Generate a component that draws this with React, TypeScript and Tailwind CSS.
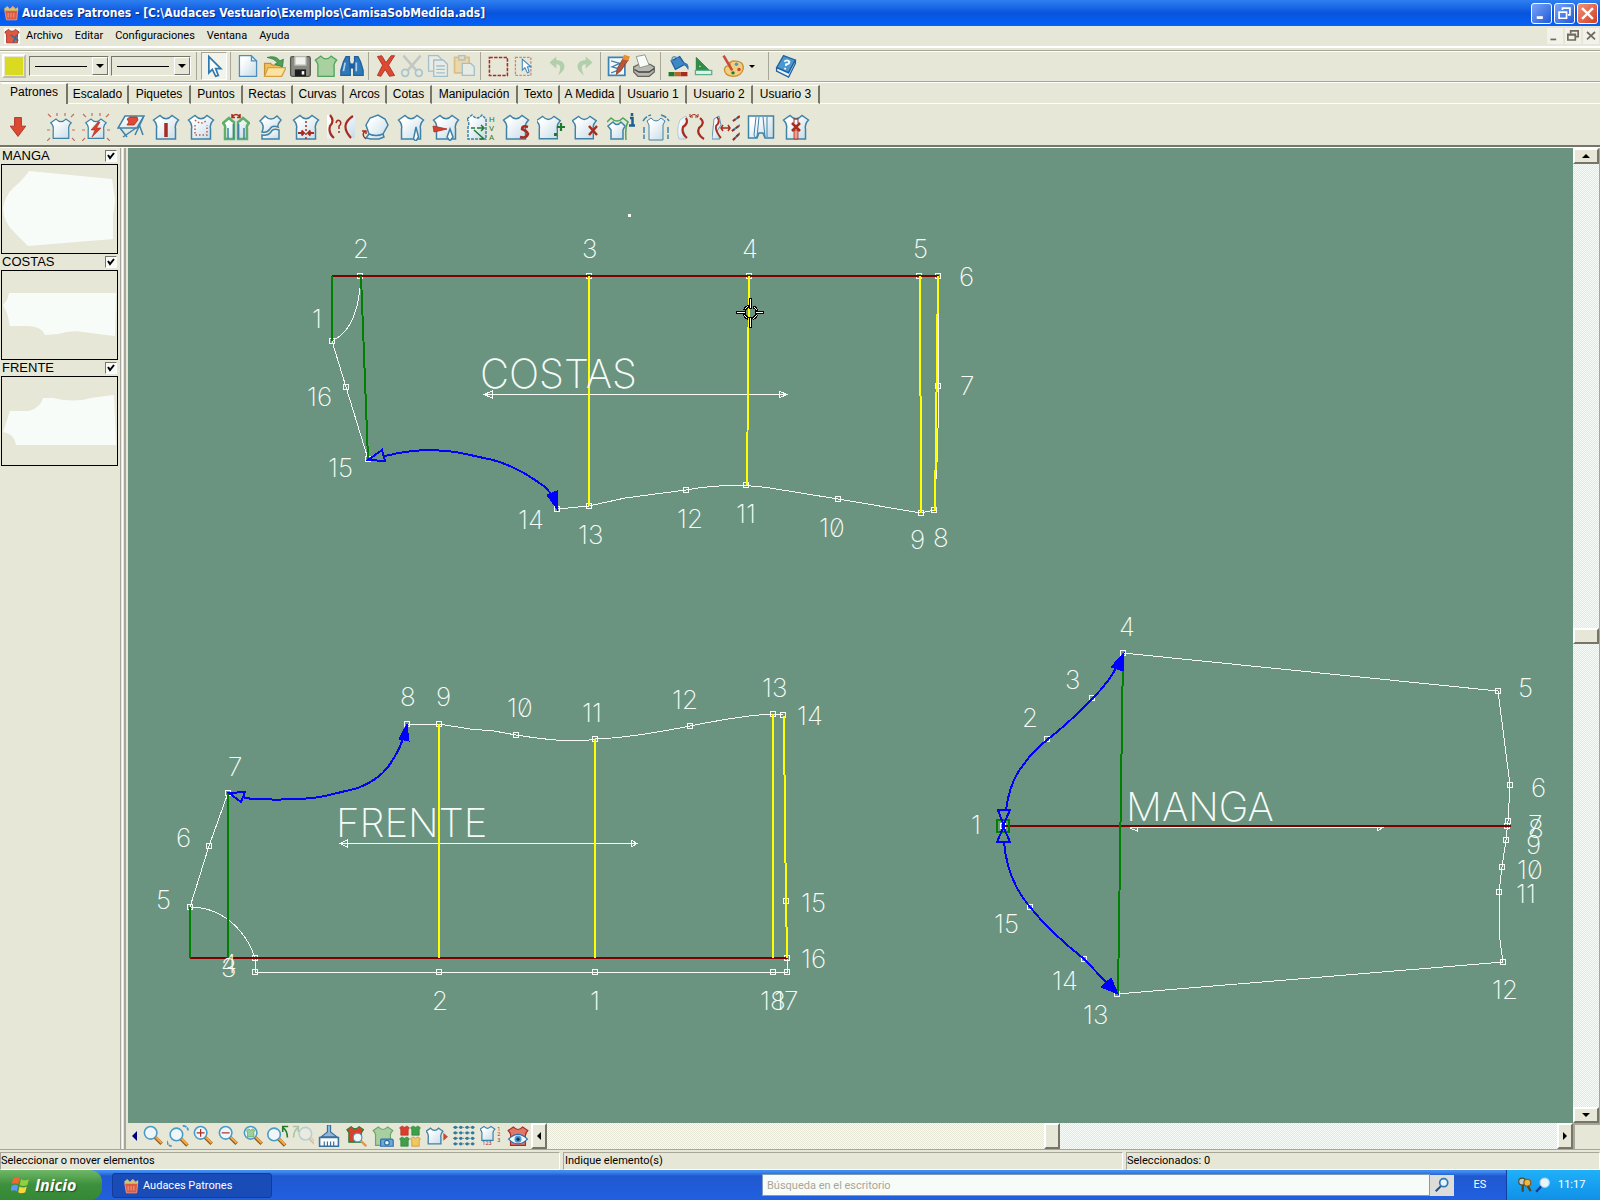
import type { ReactNode } from "react";

const BLUE = "#3f82a8";
const RED = "#a82b20";
const GREEN = "#1f7a2e";
const SHIRT = "M1.5 7 L8 2.5 Q14 9 20 2.5 L26.5 7 Q22.5 11 23.5 16 V26 H4.5 V16 Q5.5 11 1.5 7Z";

const Icon = ({ children, className = "size-7" }: { children: ReactNode; className?: string }) => (
  <svg viewBox="0 0 28 28" className={className} fill="none" strokeWidth="1.5" aria-hidden="true">
    {children}
  </svg>
);

const Shirt = ({ small, fill = "url(#cloth)", stroke = BLUE }: { small?: boolean; fill?: string; stroke?: string }) => (
  <path d={SHIRT} fill={fill} stroke={stroke} transform={small ? "translate(2.5 4) scale(0.82)" : undefined} />
);

const Rays = () => (
  <path
    d="M4 4 L1 1 M10 3 V0 M18 3 V0 M24 4 L27 1 M3 17 H0 M25 17 H28 M3 25 L0 28 M25 25 L28 28"
    stroke="#c4705a"
    strokeWidth="1.2"
  />
);

type Tool = { name: string; icon: ReactNode };

const patternTools: Tool[] = [
  { name: "Nuevo patrón", icon: <><Rays /><Shirt small /></> },
  {
    name: "Patrón rápido",
    icon: <><Rays /><Shirt small /><path d="M16 9 L9 17 H13 L10 24 L19 15 H14.500 L18 9Z" fill="#d8402c" stroke={RED} strokeWidth=".6" /></>,
  },
  {
    name: "Mesa digital",
    icon: (
      <>
        <path d="M8 3 H27 L20 15 H1Z" fill="url(#cloth)" stroke={BLUE} />
        <path d="M10 6 L13 4 H17 L20 4 L21 7 L17 12 H10 L12 9Z" fill="#dd4a35" stroke={RED} strokeWidth=".8" />
        <path d="M3 15 L10 24 M19 15 L6 24 M22 11 L26 22 M26 5 L18 22" stroke={BLUE} />
      </>
    ),
  },
  { name: "Línea central", icon: <><Shirt /><path d="M14 10 V24" stroke={RED} strokeWidth="3.500" /></> },
  { name: "Costura", icon: <><Shirt /><path d="M8 7 Q14 13 20 7 M8 12 V22 H20 V12" stroke="#b5604f" strokeDasharray="1.500 2" /></> },
  {
    name: "Desdoblar",
    icon: (
      <>
        <path d="M1 10 L7 5 Q10 8 12 9 V26 H3 V16 Q4 13 1 10Z M27 10 L21 5 Q18 8 16 9 V26 H25 V16 Q24 13 27 10Z" fill="url(#cloth)" stroke="#5fae6a" strokeWidth="2.500" />
        <path d="M11.500 11 V26 M16.500 11 V26 M6 26 V15 M22 26 V15" stroke={BLUE} />
        <path d="M10 4 Q14 -1 18 4 M10 1 V4.500 H13 M18 1 V4.500 H15" stroke={RED} />
      </>
    ),
  },
  {
    name: "Cortar",
    icon: (
      <>
        <path d="M3 8 L8 3 Q14 9 20 3 L24 7 Q20 12 21 14 Q15 12 13 16 Q10 20 5 19 Q8 12 3 8Z" fill="url(#cloth)" stroke={BLUE} />
        <path d="M5 22 Q11 23 14 19 Q16 15 22 17 V26 H5Z" fill="url(#cloth)" stroke={BLUE} />
      </>
    ),
  },
  { name: "Centrar", icon: <><Shirt /><path d="M14 8 V26" stroke={RED} strokeDasharray="2 2" /><path d="M6 20 H12 M9.500 17.500 L12 20 L9.500 22.500 M22 20 H16 M18.500 17.500 L16 20 L18.500 22.500" stroke={RED} strokeWidth="2" /></> },
  {
    name: "Comparar curvas",
    icon: (
      <>
        <path d="M-1 2 H4 Q7 8 3 13 Q2 20 6 26 H-1Z M29 3 H25 Q13 13 24 25 H29Z" fill="url(#cloth)" />
        <path d="M3 2 Q8 8 3 13 Q1 20 7 25 M26 3 Q12 12 24 25" stroke={RED} strokeWidth="2.200" />
        <path d="M9 10 Q10 6 13 8 Q15 11 12 13 V16 M12 18 V20" stroke={RED} />
      </>
    ),
  },
  {
    name: "Girar",
    icon: <><path d="M4 12 L8 5 L16 2 L23 6 L26 12 L21 21 L22 24 L17 26 H9 L4 25 L7 21Z" fill="url(#cloth)" stroke={BLUE} /><path d="M7 21 Q14 24 21 21" stroke={BLUE} /><path d="M4 26 Q-1 22 3 18 M0 18 H4 V21" stroke={RED} /></>,
  },
  { name: "Pinza", icon: <><Shirt /><path d="M16.500 26 L19 14 L21.500 24 L19 28Z" fill="#f8fcf8" stroke={BLUE} /></> },
  { name: "Mover pinza", icon: <><Shirt /><path d="M1 13 L15 16 L2 19Z" fill="#d8402c" stroke={RED} strokeWidth=".8" /><path d="M15 24 L18 16 L21 24 L18 28Z" fill="#f8fcf8" stroke={BLUE} /></> },
  {
    name: "Alinear",
    icon: (
      <>
        <path d="M0 6 L5 2 Q10 8 15 2 L19 6 V26 H1 V14 Q3 10 0 6Z" fill="url(#cloth)" stroke={BLUE} strokeDasharray="3 1" />
        <path d="M4 15 H8 M10 15 H17 M14 12 L17 15 L14 18 M7 17 L17 26 M13 26 H17" stroke={GREEN} />
        <text x="22" y="9" fontSize="8" fill={GREEN}>H</text>
        <text x="22" y="18" fontSize="8" fill={GREEN}>V</text>
        <text x="22" y="27" fontSize="8" fill={GREEN}>A</text>
      </>
    ),
  },
  { name: "Suavizar", icon: <><Shirt /><path d="M26 14 Q20 12 20 16 Q25 18 26 21 Q24 26 18 24" stroke={RED} strokeWidth="2.500" /></> },
  { name: "Añadir punto", icon: <><g transform="translate(-2 1) scale(.95)"><Shirt /></g><path d="M20 14 H28 M24 10 V18" stroke={GREEN} strokeWidth="2.200" /><path d="M17 20 H20 V23 H17Z" fill={GREEN} /></> },
  { name: "Quitar punto", icon: <><g transform="translate(-1 1) scale(.95)"><Shirt /></g><path d="M17 13 L25 22 M25 13 L17 22" stroke={RED} strokeWidth="2.500" /></> },
  {
    name: "Información",
    icon: (
      <>
        <path d="M0 9 L4 5 Q10 11 16 5 L21 9 Q18 14 19 27" stroke="#4fa35a" />
        <path d="M1 13 L6 9 Q10 14 14 9 L18 13 L16 17 V26 H4 V17Z" fill="url(#cloth)" stroke={BLUE} />
        <path d="M23 5 H25.500 V12 M22 12.500 H28 M25 0 V3" stroke="#1f5f8f" strokeWidth="2.500" />
      </>
    ),
  },
  {
    name: "Holgura",
    icon: <><path d="M5 8 L9 5 Q14 11 19 5 L23 8 Q20 12 21 16 V27 H7 V16 Q8 12 5 8Z" fill="url(#cloth)" stroke={BLUE} strokeWidth="1" /><path d="M1 8 Q4 3 9 2 M19 2 Q24 3 27 8 M2 14 V26 M26 14 V26" stroke={BLUE} strokeDasharray="6 1.500" /></>,
  },
  {
    name: "Copiar curva",
    icon: <><path d="M3 7 L9 3 L10 8 L6 15 L9 26 H2 Q-1 18 3 7Z" fill="url(#cloth)" stroke="#9fc0d0" strokeWidth=".8" /><path d="M9 5 Q12 10 6 14 Q4 20 10 25 M23 5 Q29 10 22 15 Q19 21 27 26" stroke={RED} strokeWidth="2.200" /><path d="M13 4 Q17 -1 21 4 M13 1 V4 H16 M21 1 V4 H18" stroke={RED} strokeWidth="1" /></>,
  },
  {
    name: "Ajustar curva",
    icon: <><path d="M2 6 L7 3 L9 12 L5 18 L8 26 H0Z" fill="url(#cloth)" stroke={BLUE} strokeWidth=".8" /><path d="M5 4 Q9 9 4 13 Q3 18 9 25" stroke={RED} strokeWidth="1.800" /><path d="M9 15 H18 M11 12 L9 15 L11 18 M16 12 L18 15 L16 18" stroke={RED} /><path d="M21 8 L28 3 M20 18 L28 12 M21 27 L28 20" stroke={BLUE} strokeWidth="2" /><path d="M21 8 L28 3 M20 18 L28 12 M21 27 L28 20" stroke={RED} strokeWidth="2" strokeDasharray="3 2" /></>,
  },
  {
    name: "Pantalón",
    icon: <><path d="M1.500 3 H26.500 V25 H18 L16 20 H12 L10 25 H1.500Z" fill="url(#cloth)" stroke={BLUE} /><path d="M9 4 L7 22 Q8 26 10 24 L12 4 M16 4 L18 24 M20 4 V24" stroke={BLUE} strokeWidth="1" /></>,
  },
  { name: "Eliminar patrón", icon: <><Shirt /><path d="M12 17 H16 V26 H12Z" fill="#e8a090" stroke={RED} strokeWidth=".8" /><path d="M12 10 V6 H16 V10" stroke={RED} strokeWidth="1" /><path d="M10 10 L18 18 M18 10 L10 18" stroke={RED} strokeWidth="2.500" /></> },
];

const Lens = ({ x = 11, y = 10 }: { x?: number; y?: number }) => (
  <>
    <path d={`M${x + 5} ${y + 5} L${x + 14} ${y + 14}`} stroke="#8a5a20" strokeWidth="4.500" />
    <path d={`M${x + 6} ${y + 5} L${x + 14} ${y + 13}`} stroke="#f0a848" strokeWidth="2.800" />
    <circle cx={x} cy={y} r="8" fill="#eef6f8" stroke="#4a9ac8" strokeWidth="2" />
  </>
);

const zoomTools: Tool[] = [
  { name: "Zoom", icon: <Lens /> },
  { name: "Zoom ventana", icon: <><path d="M20 1 Q26 1 27 7 M0 20 Q0 26 6 27" stroke="#4a9ac8" strokeWidth="2.200" strokeDasharray="5 1" /><Lens x={12} y={12} /></> },
  { name: "Acercar", icon: <><Lens /><path d="M6 10 H16 M11 5 V15" stroke={RED} /></> },
  { name: "Alejar", icon: <><Lens /><path d="M6 10 H16" stroke={RED} /></> },
  { name: "Zoom patrón", icon: <><Lens /><path d={SHIRT} transform="translate(5 4) scale(.43)" fill="#9fcf98" stroke="#4fa35a" strokeWidth="2" /></> },
  { name: "Zoom anterior", icon: <><Lens x={9} y={12} /><path d="M26 16 Q26 7 20 3 M20 9 V2 H27" stroke={GREEN} strokeWidth="2" /></> },
  { name: "Zoom siguiente", icon: <g opacity=".3"><Lens x={17} y={11} /><path d="M2 16 Q2 7 8 3 M1 2 H8 V9" stroke={GREEN} strokeWidth="2" /></g> },
];

const viewTools: Tool[] = [
  {
    name: "Limpiar",
    icon: <><path d="M12 0 H16 V9 L24 15 H4 L12 9Z" fill="#8fb8d8" stroke="#3a6f9f" /><path d="M2 16 H26 V27 H2Z" fill="#f8fcf8" stroke="#3a6f9f" strokeWidth="2" /><path d="M8 21 V27 M12 21 V27 M16 21 V27 M20 21 V27" stroke="#3a6f9f" /></>,
  },
  {
    name: "Ver patrón",
    icon: <><path d={SHIRT} transform="translate(1 0) scale(.85)" fill="#d8402c" stroke={GREEN} /><path d="M18 18 L27 27" stroke="#e89838" strokeWidth="3" /><circle cx="16" cy="16" r="5.500" fill="#eef6f8" stroke="#4a9ac8" /></>,
  },
  { name: "Captura", icon: <><Shirt fill="#a8cf9f" stroke="#6aa86a" /><path d="M11 19 Q11 18 13 18 H25 Q27 18 27 20 V27 H11Z" fill="#6fa8d8" stroke="#2f6fa8" /><circle cx="19" cy="22.500" r="3" fill="#e8f4f8" stroke="#2f6fa8" /></> },
  {
    name: "Mosaico",
    icon: (
      <>
        <path d={SHIRT} transform="translate(0 0) scale(.5)" fill="#d8402c" stroke={RED} />
        <path d={SHIRT} transform="translate(14 0) scale(.5)" fill="#3f9f4a" stroke={GREEN} />
        <path d={SHIRT} transform="translate(0 14) scale(.5)" fill="#3f9f4a" stroke={GREEN} />
        <path d={SHIRT} transform="translate(14 14) scale(.5)" fill="#f0c860" stroke="#c47a20" />
      </>
    ),
  },
  { name: "Siguiente patrón", icon: <><path d={SHIRT} transform="translate(-1 2) scale(.85)" fill="url(#cloth)" stroke={BLUE} strokeWidth="2" /><path d="M22 10 L28 15 L22 20Z" fill="#c84a38" /></> },
  {
    name: "Rejilla",
    icon: (
      <g fill="#2f7aa0">
        {[3, 10, 17, 24].map((y) => [3, 10, 18, 25].map((x) => <circle key={`${x}-${y}`} cx={x} cy={y} r="2.2" />))}
        <path d="M0 3 H28 M0 10 H28 M0 17 H28 M0 24 H28" stroke="#2f7aa0" strokeWidth="1" strokeDasharray="1.500 1" />
      </g>
    ),
  },
  {
    name: "Numerar",
    icon: <><path d={SHIRT} transform="translate(-1 0) scale(.75)" fill="url(#cloth)" stroke={BLUE} strokeWidth="2" /><text x="3" y="26" fontSize="7" fill={RED}>123</text><text x="22" y="7" fontSize="7" fill={RED}>1</text><text x="22" y="14" fontSize="7" fill={RED}>2</text><text x="22" y="21" fontSize="7" fill={RED}>3</text></>,
  },
  { name: "Mostrar", icon: <><Shirt fill="#e0786a" stroke={RED} /><path d="M2 18 Q14 6 26 18 Q14 30 2 18Z" fill="#f4f8f8" stroke="#2f6fa8" /><circle cx="14" cy="18" r="4.500" fill="#4a9ad8" /><circle cx="14" cy="18" r="2" fill="#12304f" /></> },
];

const fileTools: Tool[] = [
  { name: "Nuevo", icon: <path d="M4 2 H18 L24 8 V26 H4Z M18 2 V8 H24" fill="url(#cloth)" stroke="#4a8fc0" /> },
  {
    name: "Abrir",
    icon: <><path d="M3 11 H10 L12 13 H23 V25 H3Z" fill="#f0c060" stroke="#c89030" /><path d="M7 16 H28 L23 26 H3Z" fill="#fbe2a0" stroke="#d8a040" /><path d="M6 4 Q16 1 21 8 L25 6 L24 15 L15 12 L18 10 Q14 5 6 4Z" fill="#4f9f5a" stroke={GREEN} strokeWidth=".8" /></>,
  },
  { name: "Guardar", icon: <><rect x="3" y="3" width="23" height="23" rx="2" fill="#8a8a84" stroke="#55554f" /><path d="M8 3 H21 V13 H8Z" fill="#f0f2ee" stroke="#b8b8b0" /><path d="M8 18 H21 V26 H8Z" fill="#1c1c1c" /><path d="M16 20 H19 V24 H16Z" fill="#fff" /></> },
  { name: "Patrón", icon: <Shirt fill="#a8d0a0" stroke="#4fa35a" /> },
  {
    name: "Buscar",
    icon: <><path d="M7 3 H11 V8 L12 12 V25 H1 V19 L4 9Z M17 3 H21 L24 9 L27 19 V25 H16 V12 L17 8Z" fill="#2f78b8" stroke="#1f5f9f" /><path d="M11 11 H17 V17 H11Z" fill="#1f5f9f" /><path d="M4 20 L6 10 M19 20 V10" stroke="#a8d0f0" strokeWidth="2" /></>,
  },
];

const editTools: Tool[] = [
  { name: "Eliminar", icon: <path d="M4 3 L9 2 L14 10 L20 2 H24 L17 13 L24 25 L18 26 L13 18 L8 26 L4 25 L10 13Z" fill="#dc4a34" stroke="#a82b20" strokeWidth="1" /> },
  { name: "Cortar", icon: <g opacity=".4" stroke="#4a8fc0" strokeWidth="2"><path d="M4 2 L19 19 M24 2 L9 19" stroke="#8a98a0" strokeWidth="3" /><circle cx="6" cy="22" r="4" /><circle cx="22" cy="22" r="4" /></g> },
  { name: "Copiar", icon: <g opacity=".45" stroke="#4a8fc0"><path d="M3 2 H14 L18 6 V20 H3Z" fill="#eef4f4" /><path d="M9 7 H20 L25 12 V26 H9Z" fill="#eef4f4" /><path d="M12 14 H22 M12 18 H22 M12 22 H22" /></g> },
  { name: "Pegar", icon: <g opacity=".45"><path d="M3 4 H20 V22 H3Z" fill="#f0c870" stroke="#c89030" strokeWidth="2" /><path d="M8 2 H15 V7 H8Z" fill="#d0d0c8" stroke="#88887f" /><path d="M12 11 H22 L26 15 V25 H12Z" fill="#e8f0f4" stroke="#4a8fc0" /></g> },
];

const selectTools: Tool[] = [
  { name: "Seleccionar área", icon: <path d="M4 4 H25 V25 H4Z" stroke={RED} strokeWidth="1.800" strokeDasharray="4 1.500" /> },
  { name: "Seleccionar elemento", icon: <><path d="M4 4 H22 V25 H4Z" stroke="#c48a7f" strokeWidth="1.500" strokeDasharray="3 1.500" /><path d="M12 6 V19 L15 16 L18 22 L20 21 L18 15 H22Z" fill="#fff" stroke="#3f82b8" strokeWidth="1.200" /></> },
];

const historyTools: Tool[] = [
  { name: "Deshacer", icon: <path d="M12 3 L4 10 L12 17 V12 Q20 12 14 25 Q26 16 19 9 Q16 7 12 7Z" fill="#8fc090" opacity=".6" /> },
  { name: "Rehacer", icon: <path d="M16 3 L24 10 L16 17 V12 Q8 12 14 25 Q2 16 9 9 Q12 7 16 7Z" fill="#8fc090" opacity=".6" /> },
];

const outputTools: Tool[] = [
  { name: "Diseñar", icon: <><path d="M3 4 H22 V25 H3Z" fill="#f4faf8" stroke="#3f82b8" strokeWidth="2" /><path d="M6 8 L16 11 L7 15 L17 18 L6 22" stroke="#3f82b8" /><path d="M20 5 L26 7 L17 20 L12 24 L13 17Z" fill="#b8563a" stroke="#7a3020" strokeWidth=".8" /><path d="M21 1 L28 3 L26 8 L19 6Z" fill="#e89030" /></> },
  { name: "Imprimir", icon: <><path d="M2 15 L8 12 H21 L26 15 V21 L20 26 H7 L2 21Z" fill="#b8bab2" stroke="#66665f" /><path d="M5 3 L15 1 L20 13 L9 16Z" fill="#f8fcf8" stroke="#88887f" strokeWidth="1" /><path d="M3 18 L8 21 H20 L26 17" stroke="#44443f" /></> },
];

const drawTools: Tool[] = [
  { name: "Rellenar", icon: <><path d="M6 8 L16 3 L22 12 L11 18Z" fill="#3f88c8" stroke="#1f5f9f" /><path d="M7 9 Q6 0 14 5" stroke="#5f8fb0" /><path d="M20 10 Q28 10 26 19 Q23 14 20 12Z" fill="#2f78b8" /><path d="M3 21 H10 V26 H3Z" fill={GREEN} /><path d="M10 21 H17 V26 H10Z" fill="#c4602a" /><path d="M17 21 H25 V26 H17Z" fill="#a82b20" /></> },
  { name: "Medir", icon: <><path d="M5 4 V19 H20Z M8 12 V16 H12Z" fill="#2f8f4a" stroke={GREEN} strokeWidth="1" fillRule="evenodd" /><path d="M4 19 H23 V24 H4Z" fill="#dff0e8" stroke="#5fae8a" /></> },
];

const ToolButton = ({ tool, className, iconClass }: { tool: Tool; className: string; iconClass?: string }) => (
  <button type="button" aria-label={tool.name} className={`flex shrink-0 items-center justify-center ${className}`}>
    <Icon className={iconClass}>{tool.icon}</Icon>
  </button>
);

const ToolGroup = ({ tools }: { tools: Tool[] }) => (
  <div className="flex">
    {tools.map((tool) => (
      <ToolButton key={tool.name} tool={tool} className="h-7 w-[26px]" iconClass="size-6" />
    ))}
  </div>
);

const Separator = () => <div className="mr-1 ml-[3px] h-7 w-px shrink-0 bg-[#a8a698]" />;

const AppIcon = () => (
  <Icon className="size-4 shrink-0">
    <path d="M3 9 L7 3 L12 8 L17 2 L22 7 L26 6 L24 26 H6Z" fill="#dc5a40" stroke="#f0a090" />
    <path d="M2 6 L8 2 L12 7 L18 3 L22 8 L26 3 V10 H4Z" fill="#c8c878" />
    <path d="M9 14 V22 M14 14 V22 M19 14 V22" stroke="#f4a898" />
  </Icon>
);

const TitleBar = () => (
  <header className="flex h-[26px] items-center bg-linear-to-b from-[#2f7ff0] via-[#0854dc] to-[#0562f8] pr-[2px] pl-[3px]">
    <AppIcon />
    <h1 className="ml-[3px] flex-1 font-['DejaVu_Sans_Condensed','DejaVu_Sans',sans-serif] text-xs leading-4 font-bold text-white [text-shadow:1px_1px_0_#0a2a80]">
      Audaces Patrones - [C:\Audaces Vestuario\Exemplos\CamisaSobMedida.ads]
    </h1>
    <div className="flex gap-[2px]">
      <button type="button" aria-label="Minimizar" className="size-[21px] rounded-[3px] border border-white bg-linear-to-br from-[#7aa4f8] to-[#2058d8]">
        <Icon className="size-full"><path d="M7 20 H16" stroke="#fff" strokeWidth="4" /></Icon>
      </button>
      <button type="button" aria-label="Restaurar" className="size-[21px] rounded-[3px] border border-white bg-linear-to-br from-[#7aa4f8] to-[#2058d8]">
        <Icon className="size-full"><path d="M11 9 V6 H22 V16 H19 M6 12 H17 V21 H6Z" stroke="#fff" strokeWidth="2.500" /></Icon>
      </button>
      <button type="button" aria-label="Cerrar" className="size-[21px] rounded-[3px] border border-white bg-linear-to-br from-[#f09078] to-[#d03c20]">
        <Icon className="size-full"><path d="M6 6 L22 22 M22 6 L6 22" stroke="#fff" strokeWidth="3.500" /></Icon>
      </button>
    </div>
  </header>
);

const menus = ["Archivo", "Editar", "Configuraciones", "Ventana", "Ayuda"];

const MenuBar = () => (
  <nav className="flex h-5 items-center pr-px pl-1">
    <Icon className="size-4 bg-[#f8fcf8]">
      <path d={SHIRT} fill="#dc5a40" stroke={RED} />
      <path d="M12 12 L25 22 M22 12 L16 26" stroke="#2f6f9f" strokeWidth="2.500" />
    </Icon>
    <ul className="flex flex-1 pl-[6px]">
      {menus.map((menu) => (
        <li key={menu} className="mr-3">
          <button type="button">{menu}</button>
        </li>
      ))}
    </ul>
    <div className="flex gap-[2px] text-[#6f6c5f]">
      {["M6 20 H16", "M10 9 V5 H23 V15 H19 M5 11 H18 V21 H5Z M5 12 H18", "M7 7 L21 20 M21 7 L7 20"].map((d, i) => (
        <button key={d} type="button" aria-label={["Minimizar ventana", "Restaurar ventana", "Cerrar ventana"][i]} className="size-4 bg-[#f2f2ea]">
          <Icon className="size-4"><path d={d} stroke="currentColor" strokeWidth="3" /></Icon>
        </button>
      ))}
    </div>
  </nav>
);

const LineSelect = ({ label }: { label: string }) => (
  <div className="relative h-5 w-20 border border-t-[#77756a] border-r-white border-b-white border-l-[#77756a]">
    <select aria-label={label} className="size-full appearance-none text-transparent">
      <option>Continua</option>
    </select>
    <div className="pointer-events-none absolute inset-0 flex items-center">
      <div className="mx-[5px] h-px flex-1 bg-black" />
      <div className="flex h-full w-4 items-center justify-center border border-t-white border-r-[#77756a] border-b-[#77756a] border-l-white bg-[#e7e7d8]">
        <svg viewBox="0 0 8 4" className="h-1 w-2"><path d="M0 0 H8 L4 4Z" /></svg>
      </div>
    </div>
  </div>
);

const MainToolbar = () => (
  <div className="flex h-8 items-center border-y border-t-[#a8a698] border-b-[#a8a698] pl-[2px] shadow-[inset_0_1px_0_#ffffff]">
    <button type="button" aria-label="Color" className="mr-[3px] size-6 border-2 border-t-white border-r-[#c0beb0] border-b-[#c0beb0] border-l-white p-px">
      <span className="block size-full bg-[#dada20]" />
    </button>
    <div className="mr-[2px] flex gap-[2px]">
      <LineSelect label="Tipo de línea" />
      <LineSelect label="Grosor de línea" />
    </div>
    <Separator />
    <button type="button" aria-label="Seleccionar" className="flex h-7 w-[26px] items-center justify-center border border-t-[#a8a698] border-r-white border-b-white border-l-[#a8a698] bg-[#f2f3ea]">
      <Icon className="size-6"><path d="M8 3 V22 L12 18 L16 26 L19 25 L16 17 H22Z" fill="#f8fcf8" stroke="#2f78b0" strokeWidth="2" /></Icon>
    </button>
    <Separator />
    <ToolGroup tools={fileTools} />
    <Separator />
    <ToolGroup tools={editTools} />
    <Separator />
    <ToolGroup tools={selectTools} />
    <div className="w-2" />
    <ToolGroup tools={historyTools} />
    <Separator />
    <ToolGroup tools={outputTools} />
    <Separator />
    <ToolGroup tools={drawTools} />
    <button type="button" aria-label="Paleta" className="ml-1 flex h-7 w-11 items-center gap-1">
      <Icon className="size-6">
        <path d="M14 8 Q27 8 26 17 Q24 26 14 26 Q4 25 4 18 Q5 13 9 14 Q12 13 10 10Z" fill="#f0cf80" stroke="#c89030" />
        <path d="M3 2 L13 19" stroke="#c84a38" strokeWidth="3" />
        <circle cx="18" cy="12" r="2" fill="#4a9ac8" />
        <circle cx="21" cy="18" r="2" fill="#d8402c" />
        <circle cx="14" cy="22" r="2" fill={GREEN} />
      </Icon>
      <svg viewBox="0 0 6 3" className="h-[3px] w-[6px]"><path d="M0 0 H6 L3 3Z" /></svg>
    </button>
    <Separator />
    <button type="button" aria-label="Ayuda" className="flex h-7 w-[26px] items-center justify-center">
      <Icon className="size-6">
        <path d="M11 2 L25 7 L17 22 L3 16Z" fill="#4a98d0" stroke="#1f5f9f" />
        <path d="M3 16 L17 22 L25 7 V11 L17 27 L3 20Z" fill="#e8f4f8" stroke="#1f5f9f" />
        <path d="M12 9 Q15 6 18 9 Q18 12 14 12 V14 M13 16 V18" stroke="#fff" strokeWidth="2" />
      </Icon>
    </button>
  </div>
);

const tabs = [
  { name: "Escalado", width: "w-[61px]" },
  { name: "Piquetes", width: "w-[62px]" },
  { name: "Puntos", width: "w-[52px]" },
  { name: "Rectas", width: "w-[50px]" },
  { name: "Curvas", width: "w-[51px]" },
  { name: "Arcos", width: "w-[43px]" },
  { name: "Cotas", width: "w-[45px]" },
  { name: "Manipulación", width: "w-[86px]" },
  { name: "Texto", width: "w-[42px]" },
  { name: "A Medida", width: "w-[61px]" },
  { name: "Usuario 1", width: "w-[66px]" },
  { name: "Usuario 2", width: "w-[66px]" },
  { name: "Usuario 3", width: "w-[67px]" },
];

const TabPanel = () => (
  <section className="border-b-2 border-[#77756a]">
    <div role="tablist" className="flex h-[22px] items-end border-t border-white pl-[2px] font-['Liberation_Sans',Arial,sans-serif] text-xs leading-4">
      <button type="button" role="tab" aria-selected="true" className="h-[21px] w-[66px] border-t border-r-2 border-t-white border-r-[#77756a] pb-1">
        Patrones
      </button>
      {tabs.map((tab) => (
        <button key={tab.name} type="button" role="tab" aria-selected="false" className={`h-[19px] border-t border-r-2 border-b border-t-white border-r-[#77756a] border-b-white pb-[2px] whitespace-nowrap ${tab.width}`}>
          {tab.name}
        </button>
      ))}
      <div className="h-px flex-1 bg-white" />
    </div>
    <div className="flex h-[41px] items-center pt-1 pl-[6px]">
      <button type="button" aria-label="Insertar" className="mr-[13px] w-6">
        <Icon className="size-6"><path d="M10 3 H18 V13 H23 L14 25 L5 13 H10Z" fill="#dc4a34" stroke={RED} strokeWidth="1" /></Icon>
      </button>
      {patternTools.map((tool) => (
        <ToolButton key={tool.name} tool={tool} className="h-[30px] w-[35px]" />
      ))}
    </div>
  </section>
);

const pieces = [
  { name: "MANGA", shape: "M28 7 L111 15 L114 36 L112 52 V75 L27 82 L14 69 Q2 58 2 44 Q4 32 12 24 Q22 16 28 7Z" },
  { name: "COSTAS", shape: "M8 23 H115 L114 66 Q96 64 82 62 Q70 60 57 64 L44 65 Q40 55 22 56 L9 56 L6 43 L2 35 L6 30Z" },
  { name: "FRENTE", shape: "M9 35 H28 Q40 31 42 22 H52 Q74 27 90 22 Q104 20 113 19 L115 69 H15 Q14 58 2 56Z" },
];

const PieceList = () => (
  <aside className="w-[118px] shrink-0 pl-px">
    {pieces.map((piece) => (
      <div key={piece.name}>
        <label className="flex h-4 items-center justify-between px-px font-['Liberation_Sans',Arial,sans-serif] text-[13px] leading-4">
          {piece.name}
          <span className="relative size-3">
            <input type="checkbox" defaultChecked className="peer block size-3 appearance-none border border-t-[#77756a] border-r-white border-b-white border-l-[#77756a] bg-[#f8fcf8]" />
            <svg viewBox="0 0 12 12" className="pointer-events-none absolute inset-0 hidden size-3 peer-checked:block">
              <path d="M3 5 L5 8 L9 3" fill="none" stroke="#000" strokeWidth="2" />
            </svg>
          </span>
        </label>
        <svg viewBox="0 0 117 90" className="h-[90px] w-full">
          <rect x=".5" y=".5" width="116" height="89" fill="#e7e7d8" stroke="#000" />
          <path d={piece.shape} fill="#f8fcf8" />
        </svg>
      </div>
    ))}
  </aside>
);

type Mark = [string, number, number];

const numbers: Mark[] = [
  // costas
  ["1", 313, 328], ["2", 354, 258], ["3", 583, 258], ["4", 743, 258], ["5", 914, 258], ["6", 960, 286],
  ["7", 961, 395], ["8", 934, 547], ["9", 911, 549], ["10", 820, 537], ["11", 737, 523], ["12", 678, 528],
  ["13", 579, 544], ["14", 519, 529], ["15", 329, 477], ["16", 308, 406],
  // frente
  ["1", 591, 1010], ["2", 433, 1010], ["3", 222, 977], ["4", 222, 973], ["5", 157, 909], ["6", 177, 847],
  ["7", 229, 776], ["8", 401, 706], ["9", 437, 706], ["10", 508, 717], ["11", 583, 722], ["12", 673, 709],
  ["13", 763, 697], ["14", 798, 725], ["15", 802, 912], ["16", 802, 968], ["17", 775, 1010], ["18", 761, 1010],
  // manga
  ["1", 972, 834], ["2", 1023, 727], ["3", 1066, 689], ["4", 1120, 636], ["5", 1519, 697], ["6", 1532, 797],
  ["7", 1529, 834], ["8", 1529, 838], ["9", 1527, 854], ["10", 1518, 879], ["11", 1517, 903], ["12", 1493, 999],
  ["13", 1084, 1024], ["14", 1053, 990], ["15", 995, 933],
];

const points = [
  [332, 341], [360, 276], [589, 276], [749, 276], [919, 276], [938, 276], [938, 386], [934, 510], [921, 513],
  [838, 499], [746, 485], [686, 490], [589, 506], [557, 509], [368, 459], [346, 387],
  [190, 907], [209, 846], [228, 793], [407, 724], [439, 724], [516, 735], [595, 739], [690, 726], [773, 714],
  [783, 715], [786, 901], [787, 958], [787, 972], [773, 972], [595, 972], [439, 972], [255, 972], [255, 958],
  [1123, 653], [1498, 691], [1510, 785], [1508, 821], [1507, 826], [1506, 840], [1502, 867], [1499, 892],
  [1503, 962], [1117, 994], [1084, 959], [1030, 907], [1003, 826], [1047, 739], [1092, 698],
];

const Drawing = () => (
  <svg viewBox="128 148 1445 975" className="block size-full bg-[#6a9480]" fill="none" role="img" aria-label="Patrones de camisa">
    <g shapeRendering="crispEdges">
      <g stroke="#f8fcf8" strokeWidth="1">
        <path d="M360 276 V288 Q358 310 350 324 Q344 335 332 341 L346 387 L368 459 M557 509 L589 506 L625 498 L686 490 Q730 482 770 488 L838 499 L921 513 L934 510 L937 463 L939 393 L938 276" />
        <path d="M255 972 V958 Q250 943 241 932 Q220 907 190 907 L209 846 L228 793 M407 724 H439 L470 729 L494 731 L516 735 Q572 744 595 739 Q630 738 690 726 Q745 715 773 714 L783 715 M787 958 V972 H255" />
        <path d="M1123 653 L1498 691 L1510 785 L1508 821 L1506 840 L1502 867 L1499 892 V933 L1503 962 L1117 994" />
        <path d="M484 394.500 H787 M492 391 L484 394.500 L492 398Z M779 391 L787 394.500 L779 398Z" />
        <path d="M340 843.500 H637 M347 840 L340 843.500 L347 847Z M631 840 L637 843.500 L631 847Z" />
        <path d="M1130 827.500 H1383 L1377 831 V828 M1130 828 L1137 831 V828" />
        {points.map(([x, y]) => (
          <rect key={`${x}-${y}`} x={x - 2.5} y={y - 2.5} width="5" height="5" />
        ))}
        <path d="M628 215 H631" strokeWidth="3" />
      </g>
      <g strokeWidth="2">
        <path d="M332 276 H939 M190 958 H788 M1003 826 H1511" stroke="#800000" />
        <path d="M332 276 V341 M361 276 L368 459 M190 907 V958 M228 793 V958 M1123 653 L1118 994 M997 820 H1009 V832 H997Z" stroke="#008000" />
        <path d="M589 276 V506 M749 276 L747 485 M920 276 L921 513 M938 276 L935 511 M439 724 V958 M595 739 V958 M773 714 V958 M784 716 L785 830 L787 958" stroke="#ffff00" />
        <g stroke="#0000ff">
          <path d="M385 456 Q425 446 461 453 L493 460 Q515 466 538 482 Q549 489 551 495 M368 460 L382 450 L385 461Z" />
          <path d="M242 797 L252 799 Q300 801 325 796 L358 788 Q378 780 388 767 Q400 750 403 738 M229 793 L245 792 L241 802Z" />
          <path d="M1006 810 Q1010 780 1024 764 Q1034 750 1047 740 Q1070 722 1092 699 Q1110 681 1117 666 M1004 842 Q1007 880 1030 907 Q1050 932 1084 959 L1106 982 M998 810 H1010 L1003 826 L1010 842 H997 L1004 826Z" />
          <path d="M557 509 L547 495 L557 491Z M407 724 L399 739 L409 741Z M1124 653 L1111 667 L1123 671Z M1118 994 L1101 987 L1111 978Z" fill="#0000ff" strokeWidth="1" />
        </g>
      </g>
    </g>
    <g fill="#f8fcf8" className="font-['Inter',sans-serif] font-extralight slashed-zero">
      {numbers.map(([label, x, y]) => (
        <text key={`${x}-${y}`} x={x - 1} y={y} fontSize="26">{label}</text>
      ))}
      <g fontSize="40">
        <text x="480" y="388">COSTAS</text>
        <text x="336" y="837">FRENTE</text>
        <text x="1126" y="821">MANGA</text>
      </g>
    </g>
    <g stroke="#000" strokeWidth="1" fill="#fff" shapeRendering="crispEdges">
      <circle cx="750.500" cy="312.500" r="6.500" fill="none" stroke="#000" strokeWidth="3" strokeDasharray="6 4.200" strokeDashoffset="-2" />
      <circle cx="750.500" cy="312.500" r="6.500" fill="none" stroke="#fff" strokeDasharray="4 6.200" strokeDashoffset="-3" />
      <path d="M749.500 298.500 H751.500 V308.500 H749.500Z M749.500 317.500 H751.500 V327.500 H749.500Z M736.500 311.500 H745.500 V313.500 H736.500Z M755.500 311.500 H763.500 V313.500 H755.500Z" />
    </g>
  </svg>
);

const arrows = {
  up: "M0 6 H8 L4 2Z",
  down: "M0 2 H8 L4 6Z",
  left: "M6 0 V8 L2 4Z",
  right: "M2 0 V8 L6 4Z",
};

const ScrollButton = ({ direction, label, className }: { direction: keyof typeof arrows; label: string; className: string }) => (
  <button type="button" aria-label={label} className={`flex shrink-0 items-center justify-center border-2 border-t-white border-r-[#77756a] border-b-[#77756a] border-l-white bg-[#e7e7d8] ${className}`}>
    <svg viewBox="0 0 8 8" className="size-2"><path d={arrows[direction]} /></svg>
  </button>
);

const Track = () => <div className="flex-1 bg-[repeating-conic-gradient(#f8fcf8_0_25%,#e7e7d8_0_50%)] bg-[length:2px_2px]" />;

const Thumb = ({ className }: { className: string }) => (
  <div className={`shrink-0 border-2 border-t-white border-r-[#77756a] border-b-[#77756a] border-l-white bg-[#e7e7d8] ${className}`} />
);

const Workspace = () => (
  <main className="flex min-w-0 flex-1 flex-col">
    <div className="flex min-h-0 flex-1">
      <div className="min-h-0 min-w-0 flex-1">
        <Drawing />
      </div>
      <div className="flex w-[27px] shrink-0 flex-col border-r border-[#a8a698]">
        <ScrollButton direction="up" label="Subir" className="h-4" />
        <Track />
        <Thumb className="h-4" />
        <Track />
        <ScrollButton direction="down" label="Bajar" className="h-4" />
      </div>
    </div>
    <div className="flex h-[26px]">
      <div className="flex items-center">
        <button type="button" aria-label="Anterior" className="flex w-3 justify-center">
          <svg viewBox="0 0 5 10" className="h-[10px] w-[5px]"><path d="M5 0 V10 L0 5Z" fill="#000080" /></svg>
        </button>
        {zoomTools.map((tool) => (
          <ToolButton key={tool.name} tool={tool} className="h-[26px] w-[25px]" iconClass="size-[22px]" />
        ))}
        {viewTools.map((tool) => (
          <ToolButton key={tool.name} tool={tool} className="h-[26px] w-[27px]" iconClass="size-[22px]" />
        ))}
      </div>
      <ScrollButton direction="left" label="Izquierda" className="w-4" />
      <Track />
      <Thumb className="w-4" />
      <Track />
      <ScrollButton direction="right" label="Derecha" className="w-4" />
      <div className="w-[27px] shrink-0 border-t-2 border-l-2 border-[#a8a698]" />
    </div>
  </main>
);

const StatusBar = () => (
  <footer className="border-t border-[#a8a698] pt-[2px]">
    <div className="flex h-[18px] gap-[3px] leading-4">
      <p className="w-[560px] border border-t-[#a8a698] border-r-white border-b-white border-l-[#a8a698]">Seleccionar o mover elementos</p>
      <p className="w-[560px] border border-t-[#a8a698] border-r-white border-b-white border-l-[#a8a698] pl-px">Indique elemento(s)</p>
      <p className="flex-1 border border-t-[#a8a698] border-r-white border-b-white border-l-[#a8a698]">Seleccionados: 0</p>
    </div>
  </footer>
);

const Taskbar = () => (
  <div className="flex h-[30px] items-stretch bg-linear-to-b from-[#3f8cf0] from-5% via-[#2058d0] via-20% to-[#2060e0] text-white">
    <button type="button" className="flex w-[102px] items-center gap-1 rounded-r-xl bg-linear-to-b from-[#6fb868] via-[#3c8f3c] to-[#358835] pl-[11px] font-['Open_Sans',sans-serif] text-base leading-5 font-bold italic [text-shadow:1px_1px_1px_#1f4f1f]">
      <Icon className="size-5">
        <path d="M3 5 Q8 2 12 5 L10 13 Q6 10 1 13Z" fill="#f06830" />
        <path d="M14 6 Q19 9 25 6 L23 14 Q17 17 12 14Z" fill="#8fd040" />
        <path d="M1 15 Q6 12 10 15 L8 23 Q4 20 -1 23Z" fill="#5f98f8" />
        <path d="M12 16 Q17 19 22 16 L20 24 Q14 27 10 24Z" fill="#f8d838" />
      </Icon>
      Inicio
    </button>
    <button type="button" className="mt-[3px] mb-[2px] ml-[10px] flex w-40 items-center gap-1 rounded-[3px] border border-[#123c98] bg-[#1a4cb8] pl-[10px]">
      <AppIcon />
      Audaces Patrones
    </button>
    <div className="flex-1" />
    <form className="flex items-center">
      <input type="text" aria-label="Búsqueda en el escritorio" placeholder="Búsqueda en el escritorio" className="h-[22px] w-[668px] border border-[#7f9db9] bg-[#f8fcf8] px-1 text-black placeholder:text-[#a8a698]" />
      <button type="button" aria-label="Buscar" className="flex h-[21px] w-6 items-center justify-center bg-[#dcdcd8]">
        <Icon className="size-4"><path d="M3 25 L12 16" stroke="#1f4f90" strokeWidth="3.500" /><circle cx="17" cy="10" r="7" fill="#e8f4f8" stroke="#2f78b8" strokeWidth="3" /></Icon>
      </button>
    </form>
    <button type="button" className="w-[52px]">ES</button>
    <div className="flex w-[94px] items-center border-l border-[#0f3fa0] bg-linear-to-b from-[#20b0f8] to-[#1090e8] pl-[10px]">
      <Icon className="size-4">
        <circle cx="9" cy="8" r="6" fill="#c8c8c0" stroke="#504828" strokeWidth="2" />
        <circle cx="18" cy="10" r="6" fill="#f0b840" stroke="#805818" strokeWidth="2" />
        <path d="M10 14 V26 M19 16 L24 25" stroke="#504828" strokeWidth="4" />
      </Icon>
      <Icon className="ml-[2px] size-4">
        <path d="M2 26 L11 16" stroke="#123c98" strokeWidth="4" />
        <circle cx="17" cy="10" r="8" fill="#e8f4f8" stroke="#b8d8f0" strokeWidth="2" />
      </Icon>
      <time className="ml-[7px]">11:17</time>
    </div>
  </div>
);

const App = () => (
  <div className="flex h-screen flex-col overflow-hidden bg-[#e7e7d8] font-['Roboto',sans-serif] text-[11px] leading-4 text-black">
    <svg className="absolute size-0" aria-hidden="true">
      <linearGradient id="cloth" x1="0" y1="0" x2="1" y2="1">
        <stop offset="0.2" stopColor="#ffffff" />
        <stop offset="1" stopColor="#c4dae6" />
      </linearGradient>
    </svg>
    <TitleBar />
    <MenuBar />
    <div className="mb-[2px] h-[2px] bg-white" />
    <MainToolbar />
    <TabPanel />
    <div className="flex min-h-0 flex-1 border-t border-white">
      <PieceList />
      <div className="mr-[1px] ml-[2px] w-[3px] border-x border-l-[#a8a698] border-r-white" />
      <div className="mr-[2px] w-[2px] bg-[#a8a698]" />
      <Workspace />
    </div>
    <StatusBar />
    <Taskbar />
  </div>
);

export default App;
